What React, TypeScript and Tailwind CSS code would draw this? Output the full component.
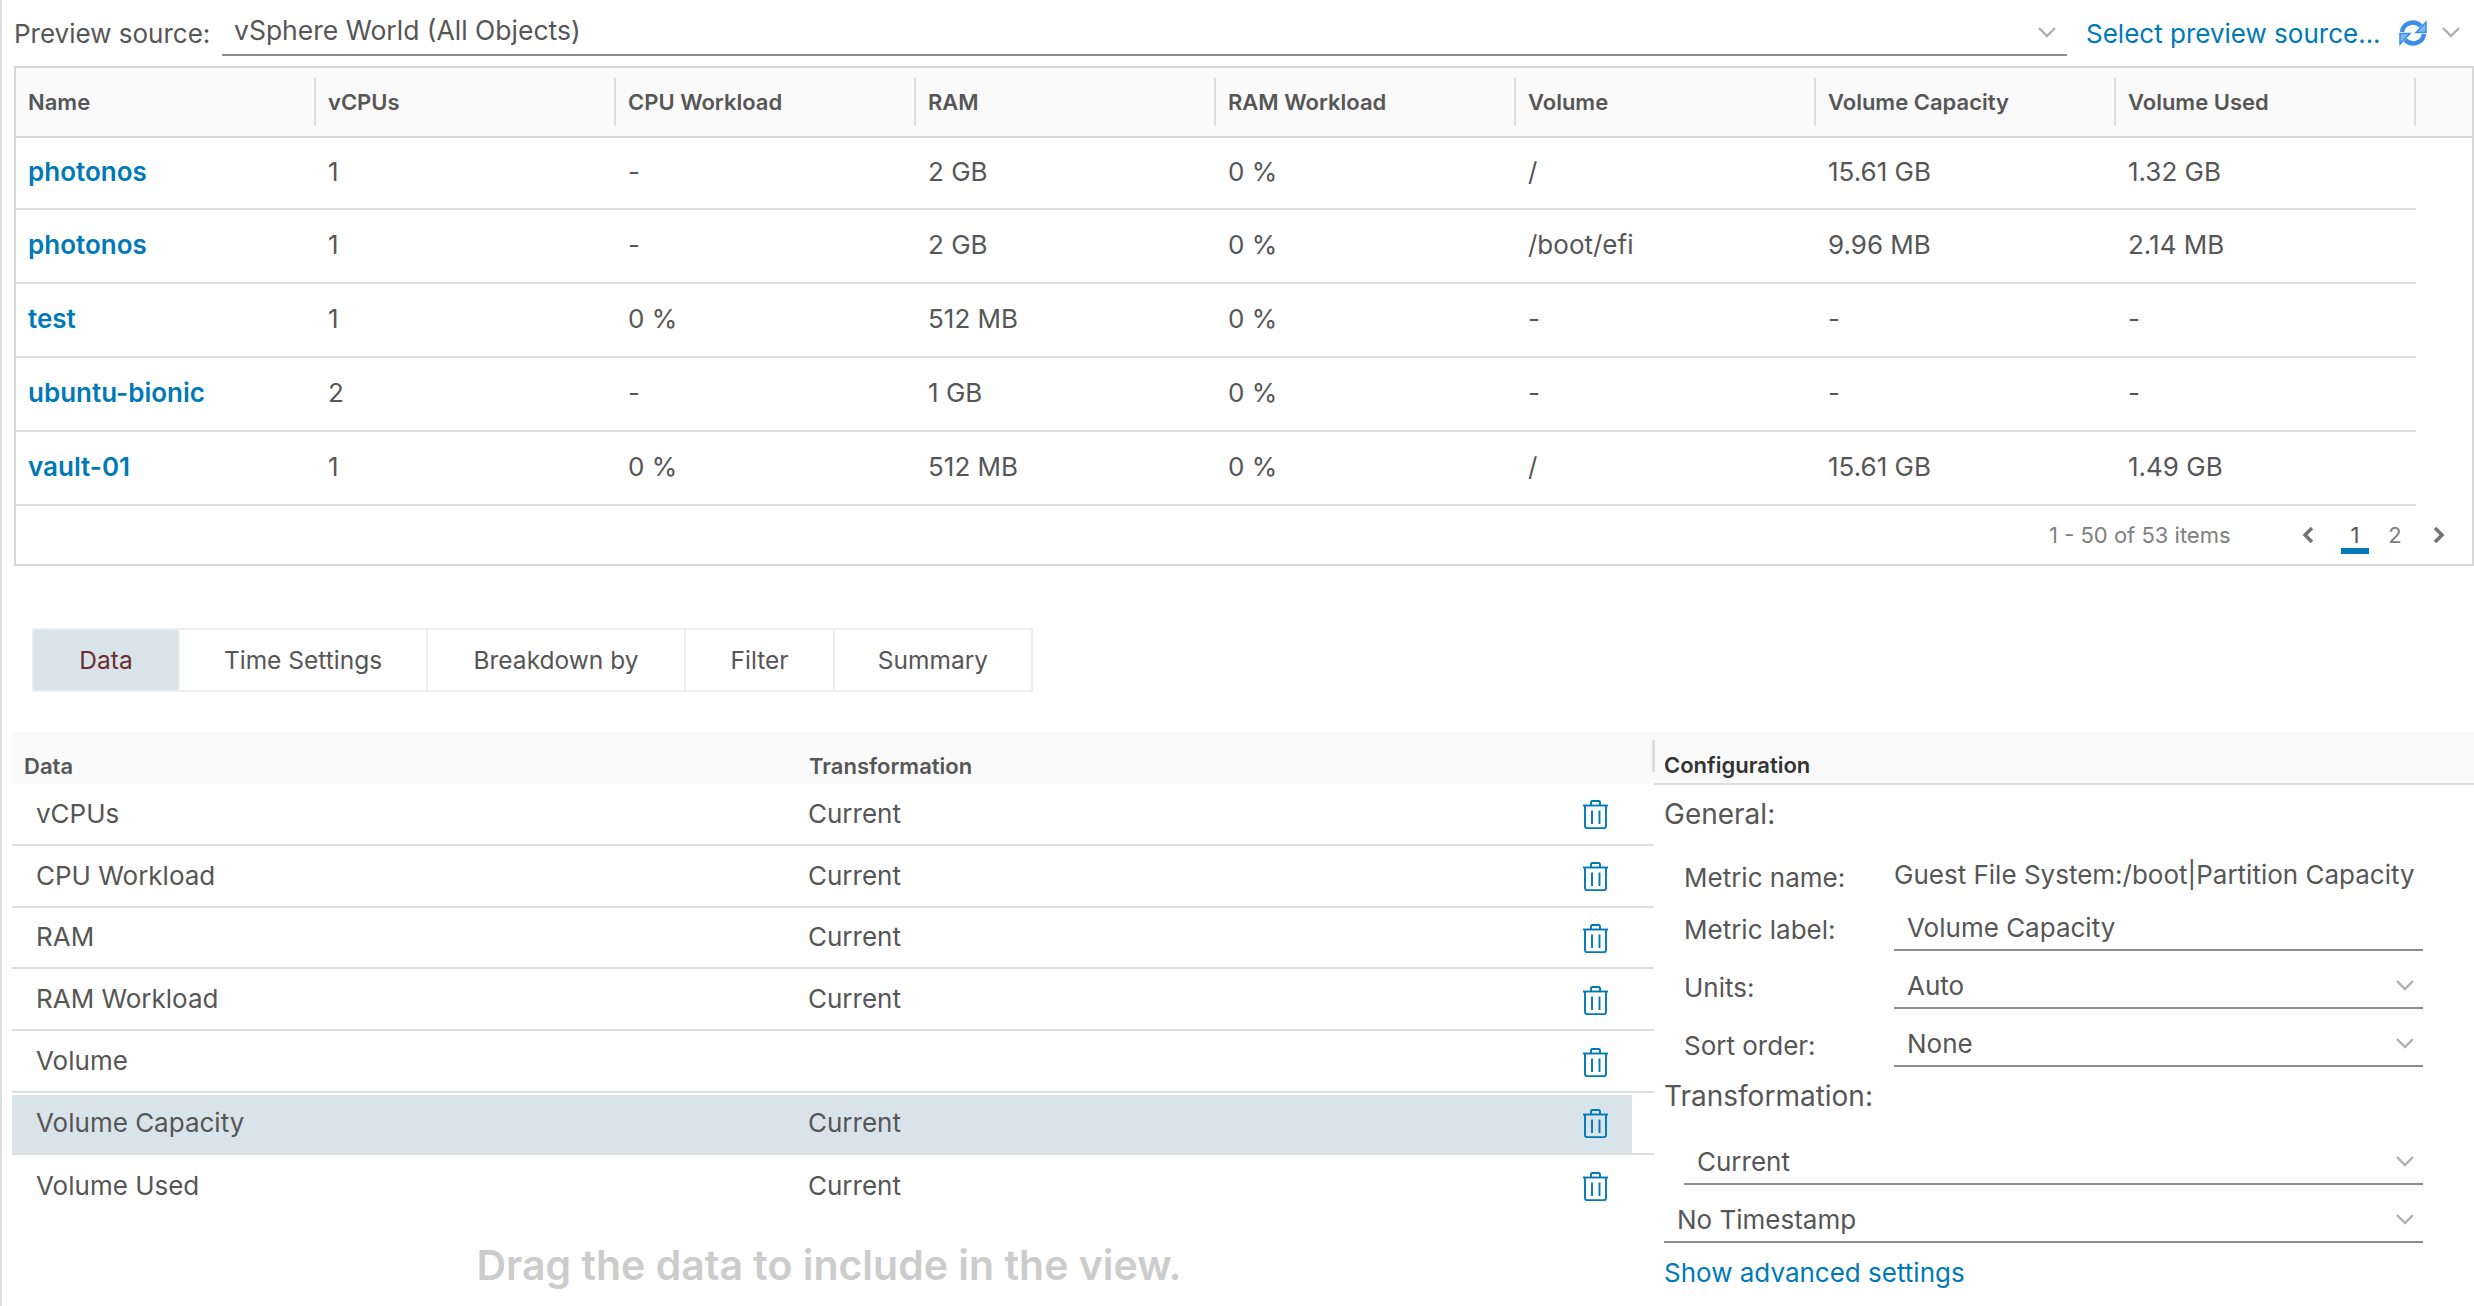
import { ReactNode } from "react";

const rows = [
  ["photonos", "1", "-", "2 GB", "0 %", "/", "15.61 GB", "1.32 GB"],
  ["photonos", "1", "-", "2 GB", "0 %", "/boot/efi", "9.96 MB", "2.14 MB"],
  ["test", "1", "0 %", "512 MB", "0 %", "-", "-", "-"],
  ["ubuntu-bionic", "2", "-", "1 GB", "0 %", "-", "-", "-"],
  ["vault-01", "1", "0 %", "512 MB", "0 %", "/", "15.61 GB", "1.49 GB"],
];

const headers = ["Name", "vCPUs", "CPU Workload", "RAM", "RAM Workload", "Volume", "Volume Capacity", "Volume Used"];

const dataRows = [
  ["vCPUs", "Current"],
  ["CPU Workload", "Current"],
  ["RAM", "Current"],
  ["RAM Workload", "Current"],
  ["Volume", ""],
  ["Volume Capacity", "Current"],
  ["Volume Used", "Current"],
];

const tabs = [
  { label: "Data", w: "w-[144px]" },
  { label: "Time Settings", w: "w-[248px]" },
  { label: "Breakdown by", w: "w-[258px]" },
  { label: "Filter", w: "w-[149px]" },
  { label: "Summary", w: "w-[198px]" },
];

const Chevron = () => (
  <svg width="20" height="12" viewBox="0 0 20 12" fill="none" stroke="#b0b0b0" strokeWidth="2.4">
    <path d="M2 2l8 8 8-8" />
  </svg>
);

const Trash = () => (
  <svg width="25" height="29" viewBox="0 0 25 29" fill="none" stroke="#0079b8" strokeWidth="1.9">
    <path d="M8 5V2.2Q8 1 9.2 1h6.6Q17 1 17 2.2V5" />
    <path d="M0 5.5h25" />
    <path d="M2 6v20q0 2.2 2.2 2.2h16.6q2.2 0 2.2-2.2V6" />
    <path d="M9 10.500v13.500M16.500 10.500v13.500" />
  </svg>
);

const Refresh = () => (
  <svg width="30" height="28" viewBox="0 0 30 28" fill="none">
    <path d="M4 13C5 5 15 0 23 7" stroke="#3b8de6" strokeWidth="4.500" />
    <path d="M18 13.500h10V3z" fill="#7db8f0" stroke="#3b8de6" strokeWidth="1.500" />
    <path d="M26 15c-1 8-11 13-19 6" stroke="#3b8de6" strokeWidth="4.500" />
    <path d="M12 14.500H2V25z" fill="#7db8f0" stroke="#3b8de6" strokeWidth="1.500" />
  </svg>
);

const Field = (props: { label: string; labelClass: string; children: ReactNode }) => (
  <div className={`flex ${props.labelClass}`}>
    <span className="w-[230px] shrink-0 pl-[20px] mb-[2px]">{props.label}</span>
    {props.children}
  </div>
);

const SelectBox = (props: { value: string }) => (
  <div className="flex items-center justify-between border-b-2 border-[#8c8c8c] pl-[13px] pr-[8px] h-[46px] w-full">
    <span>{props.value}</span>
    <Chevron />
  </div>
);

export default function App() {
  return (
    <div className="w-[2474px] h-[1306px] overflow-hidden bg-white border-l-2 border-[#dddddd] text-[#565656] text-[26px] [font-family:Inter,sans-serif]">
      {/* preview source bar */}
      <div className="flex items-center h-[66px] pl-[12px] pr-[8px]">
        <span className="w-[208px] shrink-0 mt-[1px] whitespace-nowrap">Preview source:</span>
        <div className="flex items-center justify-between w-[1845px] h-[56px] border-b-2 border-[#8c8c8c] pl-[12px] pr-[10px] self-start">
          <span className="mt-[8px] text-[26.500px]">vSphere World (All Objects)</span>
          <span className="mt-[10px]"><Chevron /></span>
        </div>
        <span className="ml-[19px] text-[#0079b8] whitespace-nowrap">Select preview source...</span>
        <span className="ml-[17px]"><Refresh /></span>
        <span className="ml-[13px] mb-[3px]"><Chevron /></span>
      </div>

      {/* table */}
      <div className="ml-[12px] w-[2460px] border-2 border-[#d7d7d7]">
        <div className="flex h-[70px] bg-[#fafafa] border-b-2 border-[#d7d7d7] items-center">
          {headers.map((h) => (
            <div key={h} className="w-[300px] h-[48px] flex items-center pl-[12px] border-r-2 border-[#dddddd] font-semibold text-[22px]">
              {h}
            </div>
          ))}
        </div>
        <div className="w-[2400px]">
          {rows.map((r, i) => (
            <div key={i} className={`flex items-center border-b-2 border-[#dddddd] pb-[3px] ${i === 0 ? "h-[72px]" : "h-[74px]"}`}>
              {r.map((c, j) => (
                <div key={j} className={`w-[300px] pl-[12px] ${j === 0 ? "text-[#0079b8] font-semibold" : ""}`}>
                  {c}
                </div>
              ))}
            </div>
          ))}
        </div>
        <div className="flex items-center h-[58px] text-[#808080] text-[22px]">
          <span className="ml-[2033px] w-[181px] whitespace-nowrap">1 - 50 of 53 items</span>
          <svg className="ml-[72px]" width="12" height="18" viewBox="0 0 12 18" fill="none" stroke="#737373" strokeWidth="3.500">
            <path d="M10 2L3 9l7 7" />
          </svg>
          <span className="relative ml-[27px] w-[28px] text-center text-[#565656]">
            1<span className="absolute left-0 top-[29px] w-[28px] h-[6px] bg-[#0079b8]" />
          </span>
          <span className="ml-[12px] w-[28px] text-center">2</span>
          <svg className="ml-[24px]" width="12" height="18" viewBox="0 0 12 18" fill="none" stroke="#737373" strokeWidth="3.500">
            <path d="M2 2l7 7-7 7" />
          </svg>
        </div>
      </div>

      {/* tabs */}
      <div className="flex ml-[30px] mt-[62px] w-fit border-2 border-[#eeeeee] text-[24.500px]">
        {tabs.map((t, i) => (
          <div
            key={t.label}
            className={`${t.w} h-[60px] flex items-center justify-center ${i > 0 ? "border-l-2 border-[#eeeeee]" : "bg-[#d9e4ea] text-[#6b2f2f]"}`}
          >
            {t.label}
          </div>
        ))}
      </div>

      {/* bottom panes */}
      <div className="flex mt-[40px]">
        <div className="w-[1642px] ml-[10px] shrink-0">
          <div className="flex h-[52px] bg-[#fafafa] items-end pb-[1px] font-semibold text-[22px]">
            <span className="w-[797px] pl-[12px]">Data</span>
            <span>Transformation</span>
          </div>
          {dataRows.map((d, i) => (
            <div key={d[0]} className={`h-[61.800px] pt-[2px] ${i < 6 ? "border-b-2 border-[#dddddd]" : ""}`}>
              <div className={`flex items-center h-full w-[1620px] ${i === 5 ? "bg-[#d9e4ea]" : ""}`}>
                <span className="w-[796px] pl-[24px] shrink-0 mb-[3px]">{d[0]}</span>
                <span className="w-[775px] shrink-0 mb-[3px]">{d[1]}</span>
                <Trash />
              </div>
            </div>
          ))}
          <div className="text-center font-semibold text-[#cccccc] text-[41px] mt-[18px] pr-[8px] whitespace-nowrap">
            Drag the data to include in the view.
          </div>
        </div>

        <div className="flex-1 min-w-0">
          <div className="relative flex items-end h-[53px] bg-[#fafafa] border-b-2 border-[#dddddd] pl-[10px] pb-[1px] font-semibold text-[22px] text-[#333333]">
            <span className="absolute left-[-2px] top-[8px] h-[32px] w-[3px] bg-[#dddddd]" />
            Configuration
          </div>
          <div className="pl-[10px] w-[769px]">
            <div className="text-[28px] mt-[8px] h-[60px]">General:</div>
            <Field label="Metric name:" labelClass="h-[50px] items-center">
              <span className="mb-[8px] whitespace-nowrap">Guest File System:/boot|Partition Capacity</span>
            </Field>
            <Field label="Metric label:" labelClass="h-[48px] items-end">
              <div className="flex w-full items-center border-b-2 border-[#8c8c8c] h-[46px] pl-[13px]">Volume Capacity</div>
            </Field>
            <Field label="Units:" labelClass="h-[58px] items-end">
              <SelectBox value="Auto" />
            </Field>
            <Field label="Sort order:" labelClass="h-[58px] items-end">
              <SelectBox value="None" />
            </Field>
            <div className="text-[28px] h-[50px] flex items-end">Transformation:</div>
            <div className="pl-[20px] h-[68px] flex items-end">
              <SelectBox value="Current" />
            </div>
            <div className="h-[58px] flex items-end">
              <SelectBox value="No Timestamp" />
            </div>
            <div className="mt-[10px] text-[#0079b8]">Show advanced settings</div>
          </div>
        </div>
      </div>
    </div>
  );
}
